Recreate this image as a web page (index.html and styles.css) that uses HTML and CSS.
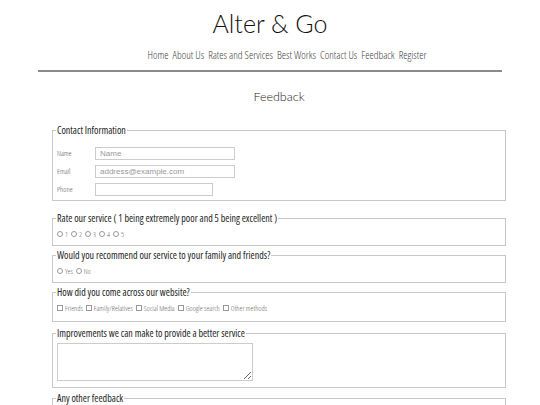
FILE: index.html
```html
<!DOCTYPE html>
<html lang="en">
<head>
  <meta charset="UTF-8">
  <title>Alter &amp; Go - Feedback</title>
  <link rel="stylesheet" href="styles.css">
</head>
<body>
  <header class="top">
    <h1 class="logo">Alter &amp; Go</h1>
    <nav class="menu">
      <a href="#">Home</a>
      <a href="#">About Us</a>
      <a href="#">Rates and Services</a>
      <a href="#">Best Works</a>
      <a href="#">Contact Us</a>
      <a href="#">Feedback</a>
      <a href="#">Register</a>
    </nav>
  </header>

  <h2 class="title">Feedback</h2>

  <form class="feedback">
    <fieldset class="contact">
      <legend>Contact Information</legend>
      <div class="row"><label for="name">Name</label><input id="name" type="text" placeholder="Name"></div>
      <div class="row"><label for="email">Email</label><input id="email" type="email" placeholder="address@example.com"></div>
      <div class="row"><label for="phone">Phone</label><input id="phone" type="tel" class="short"></div>
    </fieldset>

    <fieldset>
      <legend>Rate our service ( 1 being extremely poor and 5 being excellent )</legend>
      <div class="opts">
        <label><input type="radio" name="rate"> 1</label>
        <label><input type="radio" name="rate"> 2</label>
        <label><input type="radio" name="rate"> 3</label>
        <label><input type="radio" name="rate"> 4</label>
        <label><input type="radio" name="rate"> 5</label>
      </div>
    </fieldset>

    <fieldset>
      <legend>Would you recommend our service to your family and friends?</legend>
      <div class="opts">
        <label><input type="radio" name="rec"> Yes</label>
        <label><input type="radio" name="rec"> No</label>
      </div>
    </fieldset>

    <fieldset class="source">
      <legend>How did you come across our website?</legend>
      <div class="opts">
        <label><input type="checkbox"> Friends</label>
        <label><input type="checkbox"> Family/Relatives</label>
        <label><input type="checkbox"> Social Media</label>
        <label><input type="checkbox"> Google search</label>
        <label><input type="checkbox"> Other methods</label>
      </div>
    </fieldset>

    <fieldset class="text">
      <legend>Improvements we can make to provide a better service</legend>
      <textarea></textarea>
    </fieldset>

    <fieldset class="text">
      <legend>Any other feedback</legend>
      <textarea></textarea>
    </fieldset>
  </form>
</body>
</html>
```
FILE: styles.css
```css
body {
  margin: 0;
  font-family: "Open Sans", sans-serif;
  font-stretch: 75%;
  color: #333;
  background: #fff;
}
.top {
  margin: 0 38px;
  border-bottom: 2px solid #8a8a8a;
  text-align: center;
}
.logo {
  margin: 0;
  padding-top: 8px;
  font-family: "Lato", sans-serif;
  font-weight: 300;
  font-stretch: normal;
  font-size: 25px;
  line-height: 30px;
  color: #111;
}
.menu {
  display: flex;
  justify-content: center;
  gap: 4px;
  padding: 9px 0 8px 34px;
  font-size: 10.8px;
  font-weight: 300;
}
.menu a {
  color: #444;
  text-decoration: none;
}
.title {
  margin: 17px 0 20px;
  padding-left: 18px;
  text-align: center;
  font-family: "Lato", sans-serif;
  font-weight: 300;
  font-stretch: normal;
  font-size: 12.5px;
  color: #222;
}
.feedback {
  margin: 0 34px 0 52px;
}
fieldset {
  margin: 0 0 3px;
  padding: 3px 4px 6px;
  border: 1px solid #c8c8c8;
}
legend {
  padding: 0 1px;
  margin-left: -1px;
  font-size: 10px;
  line-height: 12px;
  color: #222;
}
.contact {
  margin-bottom: 11px;
  padding-top: 8px;
  padding-bottom: 2px;
}
.source {
  padding-bottom: 8px;
  margin-bottom: 5px;
}
.text {
  margin-bottom: 4px;
}
.row {
  display: flex;
  align-items: center;
  height: 18px;
  font-size: 7.5px;
  font-weight: 300;
  color: #555;
}
.row label {
  width: 38px;
}
.row input {
  width: 140px;
  height: 13px;
  box-sizing: border-box;
  padding: 0 4px;
  border: 1px solid #ccc;
  font-family: "Liberation Sans", sans-serif;
  font-stretch: normal;
  font-size: 8px;
  color: #777;
}
.row input.short {
  width: 118px;
}
.row input::placeholder {
  color: #999;
}
.opts {
  display: flex;
  gap: 3px;
  padding-top: 2px;
  font-size: 7.4px;
  font-weight: 300;
  color: #666;
}
.opts label {
  display: flex;
  align-items: center;
  gap: 2px;
}
.opts input {
  appearance: none;
  margin: 0;
  width: 6px;
  height: 6px;
  border: 1px solid #999;
  background: #fff;
}
.opts input[type="radio"] {
  border-radius: 50%;
}
textarea {
  display: block;
  margin-top: 1px;
  width: 196px;
  height: 38px;
  box-sizing: border-box;
  border: 1px solid #ccc;
  resize: both;
}
```
